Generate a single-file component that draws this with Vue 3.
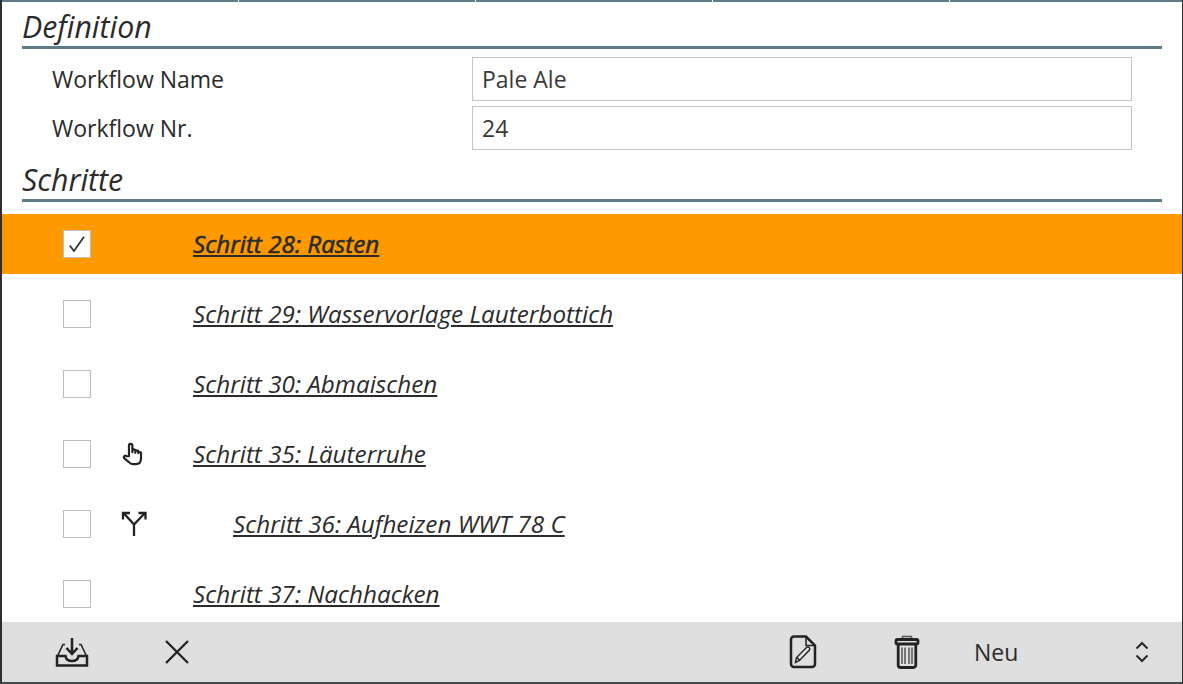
<script setup>
const tabs = [1, 2, 3, 4, 5]

const steps = [
  { id: 28, name: 'Rasten', checked: true },
  { id: 29, name: 'Wasservorlage Lauterbottich' },
  { id: 30, name: 'Abmaischen' },
  { id: 35, name: 'Läuterruhe', icon: 'hand' },
  { id: 36, name: 'Aufheizen WWT 78 C', icon: 'split', nested: true },
  { id: 37, name: 'Nachhacken' }
]
</script>

<template>
  <div class="page">
    <div class="tabs">
      <span v-for="t in tabs" :key="t" class="tab"></span>
    </div>

    <section class="head-section">
      <h2 class="section-title">Definition</h2>
      <div class="field first">
        <label>Workflow Name</label>
        <input type="text" value="Pale Ale" />
      </div>
      <div class="field">
        <label>Workflow Nr.</label>
        <input type="text" value="24" />
      </div>
      <h2 class="section-title second">Schritte</h2>
    </section>

    <div class="steps">
      <div
        v-for="step in steps"
        :key="step.id"
        class="step"
        :class="{ active: step.checked }"
      >
        <span class="check">
          <svg v-if="step.checked" width="16" height="16" viewBox="0 0 16 16">
            <path d="M0.700 9.500 L5 15 L15 0.700" fill="none" stroke="#333" stroke-width="1.800" />
          </svg>
        </span>
        <span class="step-icon">
          <svg v-if="step.icon === 'hand'" width="25" height="25" viewBox="0 0 22 22">
            <path
              d="M7 12.500V3.200a1.500 1.500 0 0 1 3 0V9l0-1.200a1.300 1.300 0 0 1 2.600 0V9.500l0-.8a1.300 1.300 0 0 1 2.600 0v1.200a1.200 1.200 0 0 1 2.400.2v4.400c0 3-1.800 5-4.800 5H10.500c-1.800 0-2.800-.8-3.800-2L2.700 14.200c-.8-1.100.6-2.800 2-1.800Z"
              fill="none"
              stroke="#222"
              stroke-width="1.900"
              stroke-linejoin="round"
            />
          </svg>
          <svg v-else-if="step.icon === 'split'" width="26" height="26" viewBox="0 0 26 26">
            <path
              d="M13 25V13.500L3 2.500M13 13.500L23.500 2.500M2 8.500V2h7M24.500 8.500V2h-7"
              fill="none"
              stroke="#222"
              stroke-width="2.300"
            />
          </svg>
        </span>
        <a class="step-link" :class="{ nested: step.nested }">Schritt {{ step.id }}: {{ step.name }}</a>
      </div>
    </div>

    <div class="toolbar">
      <button class="tool save">
        <svg width="34" height="32" viewBox="0 0 34 32">
          <path
            d="M10 8.500H8L2.500 20M24 8.500h2L31.500 20"
            fill="none"
            stroke="#222"
            stroke-width="1.600"
          />
          <path
            d="M2 20h8.500c.5 3.500 3 5 6.500 5s6-1.500 6.500-5H32v9.500H2Z"
            fill="none"
            stroke="#222"
            stroke-width="2.500"
          />
          <path d="M17 2v15M11.500 12l5.500 6 5.500-6" fill="none" stroke="#222" stroke-width="2.500" />
        </svg>
      </button>
      <button class="tool cancel">
        <svg width="26" height="26" viewBox="0 0 26 26">
          <path d="M2 2L24 24M24 2L2 24" fill="none" stroke="#222" stroke-width="2.300" />
        </svg>
      </button>
      <button class="tool edit">
        <svg width="28" height="34" viewBox="0 0 28 34">
          <path
            d="M5 1.500H17L26 10.500V29a3 3 0 0 1-3 3H5a3 3 0 0 1-3-3V4.500a3 3 0 0 1 3-3Z"
            fill="none"
            stroke="#222"
            stroke-width="2.500"
          />
          <path d="M17 2v8.500h8.500" fill="none" stroke="#222" stroke-width="1.500" />
          <path
            d="M6.500 27.500L7.500 22.500L17.500 12.500C19.500 11 21.500 13 20.500 15L10.500 25.500ZM8 22.500L10.500 25"
            fill="none"
            stroke="#222"
            stroke-width="1.400"
          />
        </svg>
      </button>
      <button class="tool trash">
        <svg width="26" height="34" viewBox="0 0 26 34">
          <path d="M8.500 4V1.500h9V4" fill="none" stroke="#555" stroke-width="1.500" />
          <rect x="2" y="4.500" width="22" height="4.500" rx="1.500" fill="none" stroke="#222" stroke-width="2.800" />
          <path d="M4.200 9V30a2.500 2.500 0 0 0 2.500 2.500h12.600a2.500 2.500 0 0 0 2.500-2.500V9" fill="none" stroke="#222" stroke-width="2.800" />
          <path d="M8 12.500V29M11 12.500V29M15 12.500V29M18 12.500V29" fill="none" stroke="#4a4a4a" stroke-width="1.400" />
        </svg>
      </button>
      <div class="select">
        <span>Neu</span>
        <svg width="14" height="22" viewBox="0 0 14 22">
          <path d="M1.500 7.500L7 2L12.500 7.500M1.500 14.500L7 20L12.500 14.500" fill="none" stroke="#2b2b2b" stroke-width="2.100" />
        </svg>
      </div>
    </div>

    <span class="scroll-mark"></span>
  </div>
</template>

<style scoped>
.page {
  position: relative;
  width: 1183px;
  height: 684px;
  box-sizing: border-box;
  display: flex;
  flex-direction: column;
  overflow: hidden;
  background: #fff;
  color: #2b2b2b;
  font-family: "Open Sans", sans-serif;
  border-left: 2px solid #2f2f2f;
  border-right: 1px solid #2f2f2f;
  border-bottom: 2px solid #45494d;
}

.tabs {
  display: flex;
  gap: 1px;
  height: 2px;
  margin-left: -2px;
  margin-right: -1px;
  flex: none;
}

.tab {
  flex: none;
  width: 236px;
  background: #5e7b88;
}

.tab:first-child {
  width: 238px;
}

.tab:last-child {
  flex: 1;
}

.head-section {
  flex: none;
  padding: 0 20px;
}

.section-title {
  margin: 0;
  height: 47px;
  box-sizing: border-box;
  padding-top: 4px;
  font-size: 30.300px;
  line-height: 41px;
  font-weight: 400;
  font-style: italic;
  color: #2b2b2b;
  border-bottom: 3px solid #5e7b88;
}

.section-title.second {
  height: 52px;
  padding-top: 9px;
}

.field {
  display: flex;
  align-items: center;
  height: 44px;
  margin-top: 5px;
  padding-left: 30px;
}

.field.first {
  margin-top: 8px;
}

.field label {
  width: 420px;
  font-size: 23px;
}

.field input {
  width: 660px;
  height: 44px;
  box-sizing: border-box;
  padding: 0 9px;
  border: 1px solid #c4c4c4;
  outline: none;
  background: #fff;
  color: #3a3a3a;
  font-family: inherit;
  font-size: 23px;
}

.steps {
  flex: 1;
  min-height: 0;
  margin-top: 12px;
  overflow: hidden;
}

.step {
  display: flex;
  align-items: center;
  height: 60px;
  margin-bottom: 10px;
  padding-left: 61px;
}

.step.active {
  background: #ff9900;
}

.check {
  width: 28px;
  height: 28px;
  box-sizing: border-box;
  flex: none;
  display: flex;
  align-items: center;
  justify-content: center;
  background: #fff;
  border: 1px solid #bdbdbd;
}

.step-icon {
  width: 102px;
  flex: none;
  padding-left: 30px;
  box-sizing: border-box;
  display: flex;
  align-items: center;
}

.step-link {
  margin-bottom: 2px;
  font-size: 24.250px;
  font-style: italic;
  text-decoration: underline;
  color: #2b2b2b;
}

.step-link.nested {
  margin-left: 40px;
}

.active .step-link {
  -webkit-text-stroke: 0.6px #2b2b2b;
}

.toolbar {
  flex: none;
  height: 60px;
  display: flex;
  align-items: center;
  background: #dfdfdf;
}

.tool {
  flex: none;
  display: flex;
  padding: 0;
  border: 0;
  background: none;
}

.save {
  margin-left: 53px;
}

.cancel {
  margin-left: 75px;
}

.edit {
  margin-left: 599px;
}

.trash {
  margin-left: 77px;
}

.select {
  flex: none;
  width: 175px;
  margin-left: 54px;
  display: flex;
  align-items: center;
  justify-content: space-between;
  font-size: 23px;
  color: #2b2b2b;
}

.scroll-mark {
  position: absolute;
  top: 232px;
  right: -1px;
  width: 1px;
  height: 100px;
  background: #00aaff;
}
</style>
